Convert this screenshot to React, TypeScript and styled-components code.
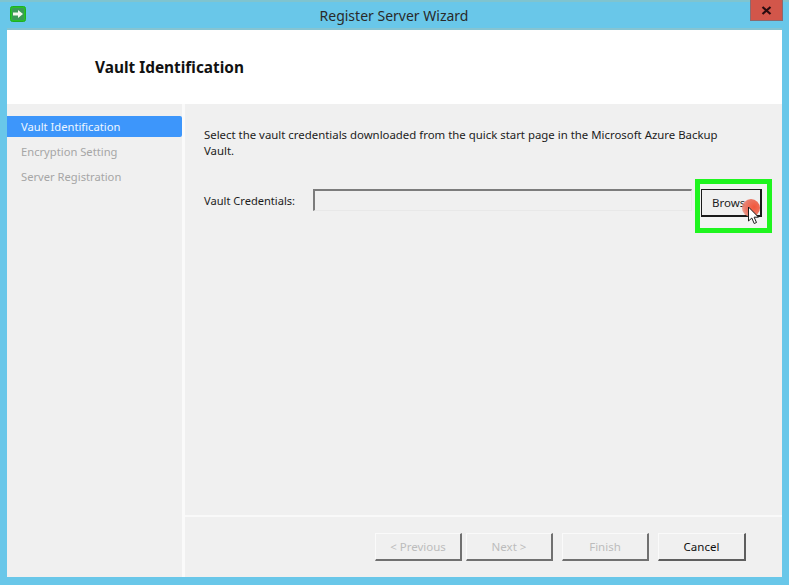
import styled, { createGlobalStyle } from "styled-components";

const steps = [
  { label: "Vault Identification", active: true },
  { label: "Encryption Setting", active: false },
  { label: "Server Registration", active: false },
];

const footerButtons = [
  { label: "< Previous", disabled: true, tight: true },
  { label: "Next >", disabled: true, tight: false },
  { label: "Finish", disabled: true, tight: false },
  { label: "Cancel", disabled: false, tight: false },
];

export default function App() {
  return (
    <>
      <GlobalStyle />
      <Frame>
        <TitleBar>
          <AppIcon viewBox="0 0 16 16">
            <rect x="0.5" y="0.5" width="15" height="15" rx="2" fill="#27c22a" stroke="#1fae22" />
            <rect x="2" y="2" width="12" height="12" fill="#3a9a58" />
            <path d="M3 6.500h5V4l5 4-5 4V9.500H3z" fill="#f4f7ee" />
          </AppIcon>
          <Title>Register Server Wizard</Title>
          <CloseButton>
            <svg width="11" height="9" viewBox="0 0 11 9">
              <path d="M1.500 1l8 7M9.500 1l-8 7" stroke="#2a0c10" strokeWidth="2.200" />
            </svg>
          </CloseButton>
        </TitleBar>
        <Client>
          <Header>
            <Heading>Vault Identification</Heading>
          </Header>
          <Body>
            <Sidebar>
              {steps.map((step) => (
                <Step key={step.label} $active={step.active}>
                  {step.label}
                </Step>
              ))}
            </Sidebar>
            <Main>
              <Content>
                <Intro>
                  Select the vault credentials downloaded from the quick start page in the Microsoft Azure Backup
                  <br />
                  Vault.
                </Intro>
                <FieldRow>
                  <FieldLabel>Vault Credentials:</FieldLabel>
                  <PathInput />
                  <Highlight>
                    <BrowseButton>Brows</BrowseButton>
                    <ClickSpot />
                    <Cursor viewBox="0 0 14 20">
                      <path
                        d="M1.500 1v14l3.300-3 2.400 5.500 2.300-1-2.400-5.300h4.400z"
                        fill="#fff"
                        stroke="#1c1c1c"
                        strokeWidth="1"
                      />
                    </Cursor>
                  </Highlight>
                </FieldRow>
              </Content>
              <Footer>
                {footerButtons.map((button) => (
                  <FooterButton key={button.label} $disabled={button.disabled} $tight={button.tight}>
                    {button.label}
                  </FooterButton>
                ))}
              </Footer>
            </Main>
          </Body>
        </Client>
      </Frame>
    </>
  );
}

const GlobalStyle = createGlobalStyle`
  html, body {
    margin: 0;
    padding: 0;
  }

  body {
    font-family: "Noto Sans", "Open Sans", "Liberation Sans", sans-serif;
    font-size: 11.4px;
    color: #1c1c1c;
  }
`;

const Frame = styled.div`
  width: 789px;
  height: 585px;
  box-sizing: border-box;
  padding: 0 7px 8px 7px;
  background: #69c7e9;
  display: flex;
  flex-direction: column;
  overflow: hidden;
`;

const TitleBar = styled.div`
  height: 30px;
  flex: none;
  position: relative;
  display: flex;
  align-items: center;
  justify-content: center;
  margin: 0 -7px;
  border-top: 2px solid #7fc4cf;
  box-sizing: border-box;
`;

const AppIcon = styled.svg`
  position: absolute;
  left: 10px;
  top: 4px;
  width: 16px;
  height: 16px;
`;

const Title = styled.div`
  font-size: 14px;
  color: #2a2a2a;
  margin-top: -2px;
  margin-left: -1px;
`;

const CloseButton = styled.div`
  position: absolute;
  right: 6px;
  top: -2px;
  width: 33px;
  height: 21px;
  box-sizing: border-box;
  background: #d2564a;
  border: 1px solid #8a6a70;
  border-top: none;
  display: flex;
  align-items: center;
  justify-content: center;
`;

const Client = styled.div`
  flex: 1;
  display: flex;
  flex-direction: column;
  background: #f0f0f0;
  min-height: 0;
  box-shadow: 0 -2px 0 #86c4d2;
`;

const Header = styled.div`
  height: 74px;
  flex: none;
  background: #ffffff;
  display: flex;
  align-items: center;
  padding-left: 88px;
`;

const Heading = styled.h1`
  margin: 0;
  font-size: 15.4px;
  font-weight: 700;
  color: #111;
`;

const Body = styled.div`
  flex: 1;
  display: flex;
  min-height: 0;
`;

const Sidebar = styled.div`
  width: 175px;
  flex: none;
  padding-top: 12px;
  display: flex;
  flex-direction: column;
  gap: 4px;
  border-right: 3px solid #fafafa;
  font-size: 11.2px;
`;

const Step = styled.div<{ $active: boolean }>`
  height: 21px;
  line-height: 21px;
  padding-left: 14px;
  border-radius: 0 2px 2px 0;
  background: ${({ $active }) => ($active ? "#3d96fb" : "transparent")};
  color: ${({ $active }) => ($active ? "#eef6ff" : "#a6a6a6")};
`;

const Main = styled.div`
  flex: 1;
  display: flex;
  flex-direction: column;
  min-width: 0;
`;

const Content = styled.div`
  flex: 1;
  padding: 23px 10px 0 19px;
  border-bottom: 2px solid #f9f9f9;
`;

const Intro = styled.p`
  margin: 0;
  line-height: 16px;
`;

const FieldRow = styled.div`
  margin-top: 30px;
  display: flex;
  align-items: flex-start;
`;

const FieldLabel = styled.span`
  width: 109px;
  flex: none;
  line-height: 23px;
  font-size: 11.1px;
`;

const PathInput = styled.div`
  flex: none;
  width: 379px;
  height: 22px;
  box-sizing: border-box;
  border: 1px solid #e8e8e8;
  border-top: 2px solid #7c7c7c;
  border-left: 2px solid #7c7c7c;
  background: #f0f0f0;
`;

const Highlight = styled.div`
  position: relative;
  flex: none;
  width: 77px;
  height: 54px;
  margin: -10px 0 0 3px;
  box-sizing: border-box;
  border: 5px solid #1ff51f;
  background: #f3f3f3;
  display: flex;
  align-items: flex-start;
`;

const BrowseButton = styled.div`
  width: 61px;
  height: 28px;
  margin: 5px 0 0 1px;
  box-sizing: border-box;
  border: solid #1a1a1a;
  border-width: 1px 2px 2px 1px;
  background: #f0f0f0;
  padding-left: 10px;
  line-height: 25px;
  font-size: 11.5px;
`;

const ClickSpot = styled.div`
  position: absolute;
  left: 42px;
  top: 15px;
  width: 18px;
  height: 18px;
  border-radius: 50%;
  background: radial-gradient(circle at 68% 45%, #f2563a 0%, #ea7a68 55%, rgba(232, 150, 135, 0.55) 100%);
`;

const Cursor = styled.svg`
  position: absolute;
  left: 47px;
  top: 22px;
  width: 14px;
  height: 20px;
`;

const Footer = styled.div`
  height: 60px;
  flex: none;
  display: flex;
  align-items: center;
  justify-content: flex-end;
  gap: 9px;
  padding-right: 36px;
`;

const FooterButton = styled.div<{ $disabled: boolean; $tight: boolean }>`
  width: ${({ $disabled }) => ($disabled ? "87px" : "88px")};
  height: 28px;
  box-sizing: border-box;
  margin-right: ${({ $tight }) => ($tight ? "-5px" : "0")};
  border-top: 1px solid #fafafa;
  border-left: 1px solid #fafafa;
  border-right: 2px solid ${({ $disabled }) => ($disabled ? "#707070" : "#5e5e5e")};
  border-bottom: 2px solid ${({ $disabled }) => ($disabled ? "#707070" : "#5e5e5e")};
  text-align: center;
  line-height: 25px;
  font-size: 11.5px;
  color: ${({ $disabled }) => ($disabled ? "#bcbcbc" : "#111")};
`;
